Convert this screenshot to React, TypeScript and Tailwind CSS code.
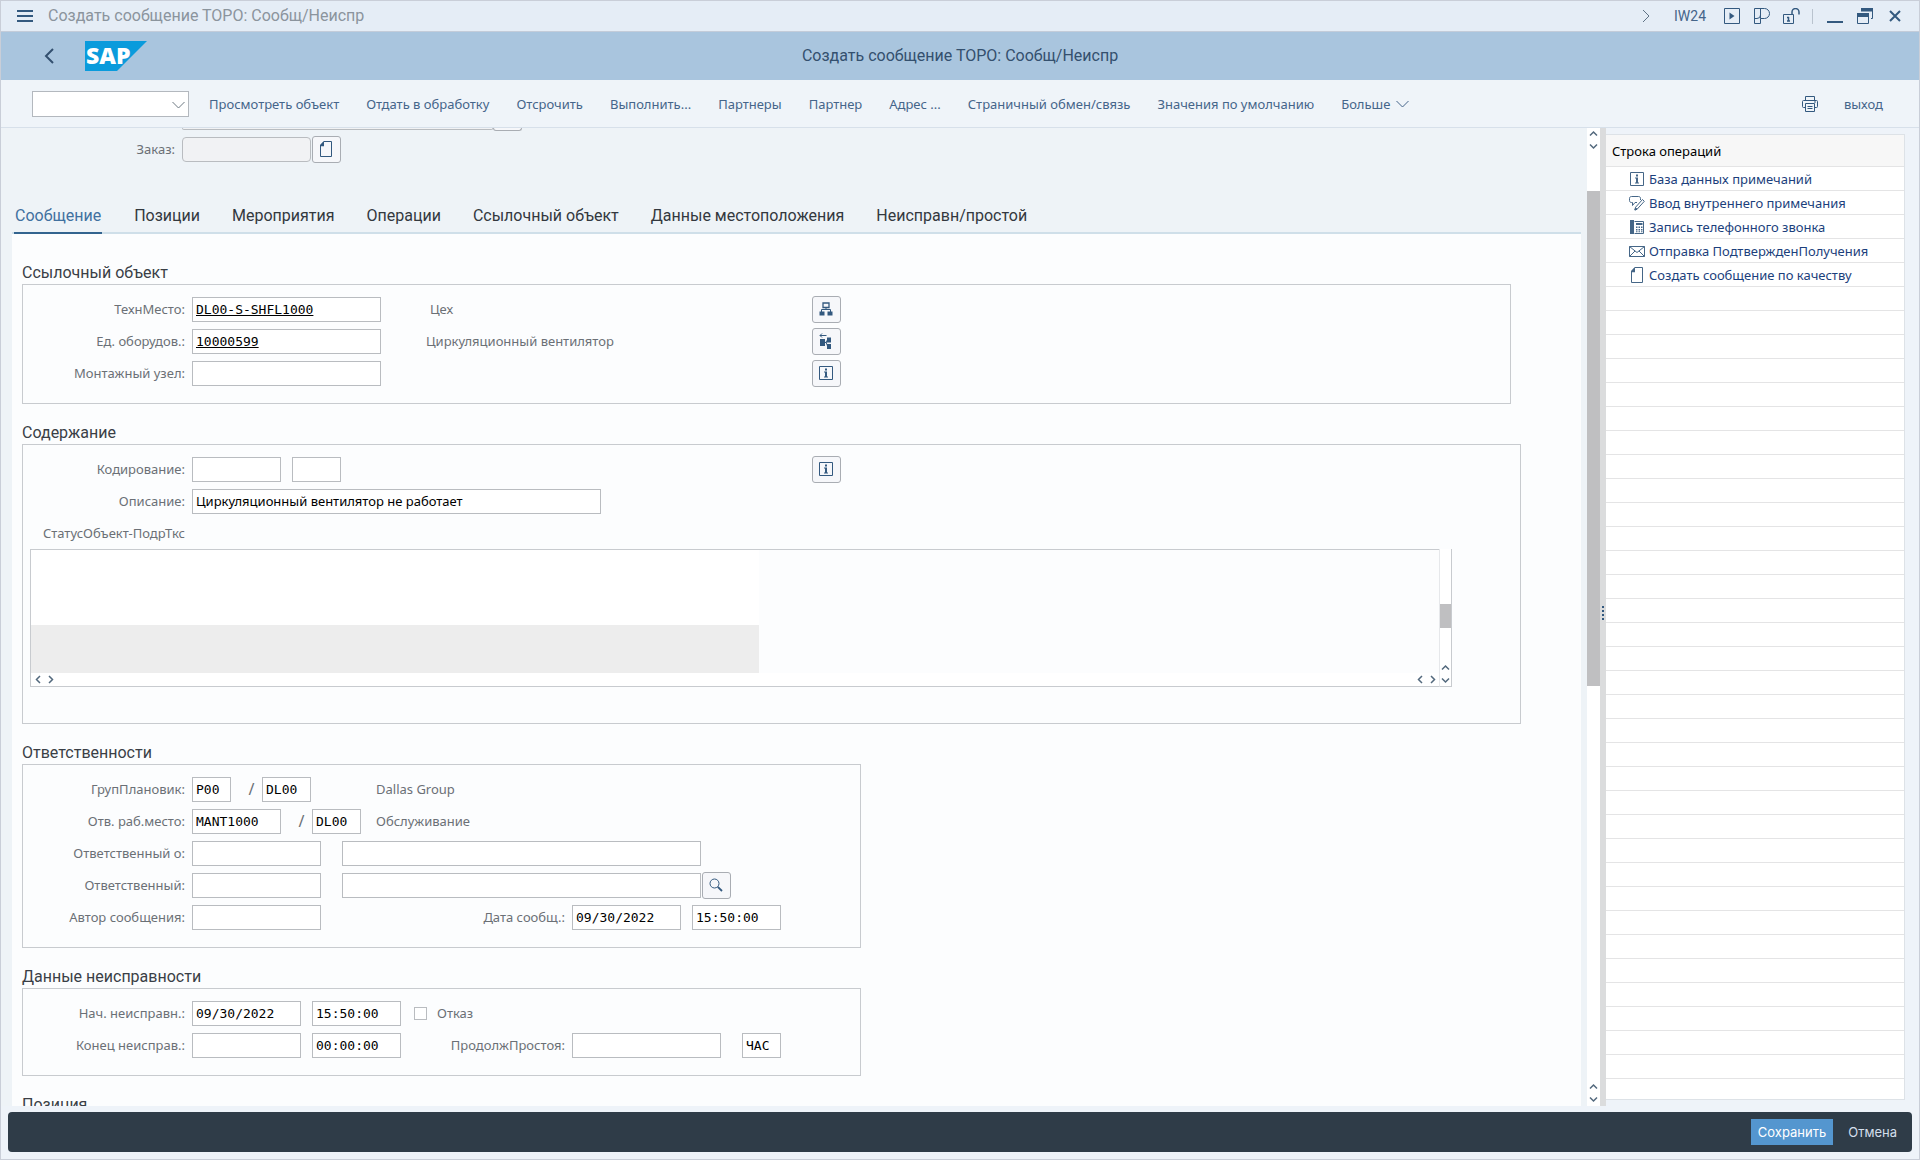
import React from "react";

type IconProps = { className?: string };

function DocIcon({ className = "" }: IconProps) {
  return (
    <svg viewBox="0 0 16 16" className={`h-4 w-4 shrink-0 ${className}`} fill="none" stroke="currentColor" aria-hidden="true">
      <path d="M6 .5h7.500v15H2.500V4.500z" />
      <path d="M2 5.200V4L6 0v5.200z" fill="currentColor" stroke="none" />
    </svg>
  );
}

function InfoIcon({ className = "" }: IconProps) {
  return (
    <svg viewBox="0 0 14 14" className={`h-3.5 w-3.5 shrink-0 ${className}`} fill="none" stroke="currentColor" aria-hidden="true">
      <path d="M.5.5h13v13H.5z" />
      <path d="M6 2.500h2V4.500H6zM5 5.500h3v5h1v1H5v-1h1v-4H5z" fill="currentColor" stroke="none" />
    </svg>
  );
}

function NoteEditIcon() {
  return (
    <svg viewBox="0 0 16 16" className="h-4 w-4 shrink-0" fill="none" stroke="currentColor" aria-hidden="true">
      <path d="M8 7.500H6L3.500 10.500V7.500H2.500C1 7.500.5 6.500.5 5.500v-2C.5 2 1.500 1.500 2.500 1.500h7c1 0 2 .5 2 2V5" />
      <path d="M13.500 4.500l1.800 1.800-7 7.700-2.500 1 .8-2.800z" />
      <path d="M6 15l.6-2 1.500 1.200z" fill="currentColor" />
    </svg>
  );
}

function FaxIcon() {
  return (
    <svg viewBox="0 0 16 16" className="h-4 w-4 shrink-0" fill="none" stroke="currentColor" aria-hidden="true">
      <path d="M1 1h4v14H1z" fill="currentColor" stroke="none" />
      <path d="M5.500 2.500h9v12h-9" />
      <path d="M7 4h6.500v2H7zM7 7.500h1.500V9H7zm2.500 0H11V9H9.500zm2.500 0h1.500V9H12zM7 10h1.500v1.500H7zm2.500 0H11v1.500H9.500zm2.500 0h1.500v1.500H12zM7 12.200h1.500v1H7zm2.500 0H11v1H9.500zm2.500 0h1.500v1H12z" fill="currentColor" stroke="none" />
    </svg>
  );
}

function MailIcon() {
  return (
    <svg viewBox="0 0 16 16" className="h-4 w-4 shrink-0" fill="none" stroke="currentColor" aria-hidden="true">
      <path d="M.5 3.500h15v10H.5z" />
      <path d="M.5 3.500L8 9.500l7.500-6M.5 13.500l5.500-5.500M15.500 13.500L10 8" />
    </svg>
  );
}

function PrinterIcon() {
  return (
    <svg viewBox="0 0 16 16" className="h-4 w-4" fill="none" stroke="currentColor" aria-hidden="true">
      <path d="M3.500 4.500v-4h9v4M3.500 11.500H1.500a1 1 0 0 1-1-1v-5a1 1 0 0 1 1-1h13a1 1 0 0 1 1 1v5a1 1 0 0 1-1 1h-2" />
      <path d="M3.500 7.500h9v8h-9zM5.500 10.500h5M5.500 12.500h5M12 6h2" />
    </svg>
  );
}

function HierarchyIcon() {
  return (
    <svg viewBox="0 0 14 14" className="h-3.5 w-3.5" fill="none" stroke="currentColor" aria-hidden="true">
      <path d="M4 1h6v4.500H4z" strokeWidth="1.300" />
      <path d="M7 5.500V7.500M2.500 10V7.500h9V10" />
      <path d="M.5 9.500h5v4h-5zM8.500 9.500h5v4h-5z" fill="currentColor" stroke="none" />
    </svg>
  );
}

function StructureIcon() {
  return (
    <svg viewBox="0 0 14 16" className="h-4 w-3.5" fill="none" stroke="currentColor" aria-hidden="true">
      <path d="M7.500 2.500H1M3 .5l-2 2 2 2" />
      <path d="M1 6h5v7H1zM8 4.500h4v5H8zM8 11h4v5H8z" fill="currentColor" stroke="none" />
      <path d="M5 9.500h2.500M8.500 7L7 9l1.500 4" />
    </svg>
  );
}

function SearchIcon() {
  return (
    <svg viewBox="0 0 14 14" className="h-3.5 w-3.5" fill="none" stroke="currentColor" aria-hidden="true">
      <circle cx="5.500" cy="5.500" r="4.500" />
      <path d="M8.800 8.800l4.200 4.200" strokeWidth="1.800" />
    </svg>
  );
}

function Chevron({ dir, className = "" }: { dir: "up" | "down" | "left" | "right"; className?: string }) {
  const d = {
    up: "M1 5.500L4.500 2l3.500 3.500",
    down: "M1 2.500L4.500 6 8 2.500",
    left: "M6 1L2.500 4.500 6 8",
    right: "M3 1l3.500 3.500L3 8",
  }[dir];
  return (
    <svg viewBox="0 0 9 9" className={`h-[9px] w-[9px] ${className}`} fill="none" stroke="#53697d" strokeWidth="1.500" aria-hidden="true">
      <path d={d} />
    </svg>
  );
}

function WideChevron({ className = "" }: IconProps) {
  return (
    <svg viewBox="0 0 13 8" className={`h-2 w-[13px] ${className}`} fill="none" stroke="currentColor" aria-hidden="true">
      <path d="M.5 1l6 6 6-6" />
    </svg>
  );
}

function IconButton({ label, children, className = "" }: { label: string; children: React.ReactNode; className?: string }) {
  return (
    <button
      type="button"
      aria-label={label}
      className={`flex h-[27px] w-[29px] shrink-0 items-center justify-center rounded-[3px] border border-[#a9adb3] bg-[#f6f7fa] pr-0.5 text-[#33597f] ${className}`}
    >
      {children}
    </button>
  );
}

function Field({ id, label, value = "", className, mono = true }: { id?: string; label?: string; value?: string; className: string; mono?: boolean }) {
  return (
    <input
      id={id}
      aria-label={label}
      type="text"
      defaultValue={value}
      className={`h-[25px] shrink-0 border border-[#b9bcc0] bg-white pl-[3px] text-[13px] leading-4 text-black ${mono ? "font-['DejaVu_Sans_Mono',monospace]" : ""} ${className}`}
    />
  );
}

function Label({ htmlFor, children, className = "w-[162px]" }: { htmlFor?: string; children: React.ReactNode; className?: string }) {
  return (
    <label htmlFor={htmlFor} className={`mr-[7px] shrink-0 text-right whitespace-nowrap ${className}`}>
      {children}
    </label>
  );
}

function Row({ children }: { children: React.ReactNode }) {
  return <div className="flex h-8 items-center">{children}</div>;
}

function Group({ title, className, children }: { title: string; className: string; children: React.ReactNode }) {
  return (
    <section className="flex flex-col">
      <h2 className="flex h-10 items-end font-['Roboto',sans-serif] text-[16px] leading-[22px] text-[#3a3f46]">{title}</h2>
      <div className={`border border-[#c8cbcf] pt-2 ${className}`}>{children}</div>
    </section>
  );
}

const menu = [
  "Просмотреть объект",
  "Отдать в обработку",
  "Отсрочить",
  "Выполнить...",
  "Партнеры",
  "Партнер",
  "Адрес ...",
  "Страничный обмен/связь",
  "Значения по умолчанию",
];

const tabs = ["Сообщение", "Позиции", "Мероприятия", "Операции", "Ссылочный объект", "Данные местоположения", "Неисправн/простой"];

const actions = [
  { text: "База данных примечаний", icon: <InfoIcon className="mx-px" /> },
  { text: "Ввод внутреннего примечания", icon: <NoteEditIcon /> },
  { text: "Запись телефонного звонка", icon: <FaxIcon /> },
  { text: "Отправка ПодтвержденПолучения", icon: <MailIcon /> },
  { text: "Создать сообщение по качеству", icon: <DocIcon /> },
];

function TitleBar() {
  return (
    <div className="flex h-8 shrink-0 items-center border-y border-t-[#c9ced8] border-b-[#c3ccd9] bg-[#e5edf6] pr-[18px] pl-4 text-[#33597f]">
      <button type="button" aria-label="Меню" className="mr-[15px]">
        <svg viewBox="0 0 16 14" className="h-3.5 w-4" stroke="currentColor" strokeWidth="2" aria-hidden="true">
          <path d="M0 2h16M0 7h16M0 12h16" />
        </svg>
      </button>
      <span className="grow font-['Roboto',sans-serif] text-[16px] leading-6 text-[#8b949d]">Создать сообщение ТОРО: Сообщ/Неиспр</span>
      <button type="button" aria-label="Развернуть">
        <svg viewBox="0 0 8 14" className="h-3.5 w-2" fill="none" stroke="#5f7385" aria-hidden="true">
          <path d="M1 1l6 6-6 6" />
        </svg>
      </button>
      <span className="ml-6 font-['Roboto',sans-serif] text-[14px] leading-5 text-[#45658a]">IW24</span>
      <button type="button" aria-label="Запустить" className="ml-[18px]">
        <svg viewBox="0 0 16 16" className="h-4 w-4" fill="none" stroke="currentColor" aria-hidden="true">
          <path d="M.5.5h15v15H.5z" />
          <path d="M5.500 4.500v7l5-3.500z" fill="currentColor" stroke="none" />
        </svg>
      </button>
      <button type="button" aria-label="Параметры" className="ml-3.5">
        <svg viewBox="0 0 16 16" className="h-4 w-4" fill="none" stroke="currentColor" aria-hidden="true">
          <path d="M.5.500h10a5 5 0 0 1 0 10h-4v5h-6zM6.500 .5v6.500a3.500 3.500 0 0 1-3.500 3.500H.5M6.500 10.500V7" />
        </svg>
      </button>
      <button type="button" aria-label="Разблокировать" className="ml-[13px]">
        <svg viewBox="0 0 17 17" className="h-[17px] w-[17px]" fill="none" stroke="currentColor" aria-hidden="true">
          <path d="M.5 6.500h10v9H.5z" />
          <path d="M9 6.500V4a3.500 3.500 0 0 1 7 0v2.500" strokeWidth="1.500" />
          <path d="M5.500 9v4M4 9.500h2M4 13h3" strokeWidth="1.500" />
        </svg>
      </button>
      <span className="ml-3 h-[15px] w-px bg-[#b9c3ce]" />
      <button type="button" aria-label="Свернуть" className="ml-[14px]">
        <svg viewBox="0 0 16 16" className="h-4 w-4" stroke="currentColor" strokeWidth="2" aria-hidden="true">
          <path d="M0 14h16" />
        </svg>
      </button>
      <button type="button" aria-label="Восстановить" className="ml-[14px]">
        <svg viewBox="0 0 16 16" className="h-4 w-4" fill="none" stroke="currentColor" aria-hidden="true">
          <path d="M4 0h12v3.500H4zM0 5h12v4H0z" fill="currentColor" stroke="none" />
          <path d="M.5 5.500h11v10H.5zM15.500 3v7.500H14" />
        </svg>
      </button>
      <button type="button" aria-label="Закрыть" className="ml-4">
        <svg viewBox="0 0 12 12" className="h-3 w-3" stroke="currentColor" strokeWidth="2" aria-hidden="true">
          <path d="M1 1l10 10M11 1L1 11" />
        </svg>
      </button>
    </div>
  );
}

function Header() {
  return (
    <header className="grid h-12 shrink-0 grid-cols-[1fr_auto_1fr] items-center bg-[#a9c5de]">
      <div className="flex items-center">
        <button type="button" aria-label="Назад" className="ml-[43px] text-[#33506f]">
          <svg viewBox="0 0 10 16" className="h-4 w-2.5" fill="none" stroke="currentColor" strokeWidth="2" aria-hidden="true">
            <path d="M9 1L2 8l7 7" />
          </svg>
        </button>
        <svg viewBox="0 0 62 30" className="ml-[31px] h-[30px] w-[62px] overflow-visible" role="img" aria-label="SAP">
          <path d="M0 0h62L32 30H0z" fill="#0a9bdc" />
          <text x="1" y="23" fill="#fff" fontFamily="Open Sans" fontWeight="800" fontSize="23">SAP</text>
        </svg>
      </div>
      <h1 className="font-['Roboto',sans-serif] text-[16px] leading-6 text-[#34506e]">Создать сообщение ТОРО: Сообщ/Неиспр</h1>
      <div />
    </header>
  );
}

function Toolbar() {
  return (
    <nav className="flex h-12 shrink-0 items-center border-b border-[#d7e0ea] bg-[#eff4f9] pr-9 pl-[31px] text-[13px] leading-5 text-[#45658a]">
      <div className="relative">
        <select aria-label="Код транзакции" className="block h-[26px] w-[157px] appearance-none border border-[#b3b8be] bg-white" />
        <WideChevron className="pointer-events-none absolute top-[10px] right-1 text-[#6d7882]" />
      </div>
      <ul className="ml-5 flex items-center gap-[27px]">
        {menu.map((m) => (
          <li key={m}>
            <button type="button" className="whitespace-nowrap">{m}</button>
          </li>
        ))}
        <li>
          <button type="button" className="flex items-center gap-1.5">
            Больше
            <WideChevron />
          </button>
        </li>
      </ul>
      <button type="button" aria-label="Печать" className="ml-auto text-[#33597f]">
        <PrinterIcon />
      </button>
      <button type="button" className="ml-[26px]">выход</button>
    </nav>
  );
}

function TextEditor() {
  return (
    <div className="mr-[68px] ml-[7px] flex h-[138px] border-l border-[#c8cbcf]">
      <div className="flex min-w-0 grow flex-col border-y border-[#c8cbcf]">
        <div className="w-[728px] bg-white">
          <textarea aria-label="Текст сообщения" className="block h-[75px] w-full resize-none bg-white outline-none" />
          <div className="h-12 bg-[#ededed]" />
        </div>
        <div className="flex grow items-center justify-between bg-white pr-0.5 pl-[3px]">
          <div className="flex gap-[3px]">
            <Chevron dir="left" />
            <Chevron dir="right" />
          </div>
          <div className="flex gap-[3px]">
            <Chevron dir="left" />
            <Chevron dir="right" />
          </div>
        </div>
      </div>
      <div className="flex w-[13px] flex-col items-center border-x border-b border-r-[#c8cbcf] border-b-[#c8cbcf] border-l-[#e6e8eb] bg-white pb-[1px]">
        <div className="mt-[55px] mb-auto h-6 w-full bg-[#bfbfc1]" />
        <Chevron dir="up" className="mb-[3px]" />
        <Chevron dir="down" />
      </div>
    </div>
  );
}

function MessageForm() {
  return (
    <div className="flex grow flex-col pt-2.5 pl-2.5 text-[13px] leading-4 text-[#6b7076]">
      <Group title="Ссылочный объект" className="mr-[70px] h-[120px]">
        <Row>
          <Label htmlFor="place">ТехнМесто:</Label>
          <Field id="place" value="DL00-S-SHFL1000" className="w-[189px] underline" />
          <span className="ml-[49px] w-[382px]">Цех</span>
          <IconButton label="Структура места"><HierarchyIcon /></IconButton>
        </Row>
        <Row>
          <Label htmlFor="equip">Ед. оборудов.:</Label>
          <Field id="equip" value="10000599" className="w-[189px] underline" />
          <span className="ml-[45px] w-[386px]">Циркуляционный вентилятор</span>
          <IconButton label="Структура оборудования"><StructureIcon /></IconButton>
        </Row>
        <Row>
          <Label htmlFor="unit">Монтажный узел:</Label>
          <Field id="unit" className="w-[189px]" />
          <IconButton label="Информация об узле" className="ml-[431px]"><InfoIcon /></IconButton>
        </Row>
      </Group>

      <Group title="Содержание" className="mr-[60px] h-[280px]">
        <Row>
          <Label htmlFor="code">Кодирование:</Label>
          <Field id="code" className="w-[89px]" />
          <Field label="Код" className="ml-[11px] w-[49px]" />
          <IconButton label="Информация о коде" className="ml-[471px]"><InfoIcon /></IconButton>
        </Row>
        <Row>
          <Label htmlFor="descr">Описание:</Label>
          <Field id="descr" mono={false} value="Циркуляционный вентилятор не работает" className="w-[409px]" />
        </Row>
        <Row>
          <Label>СтатусОбъект-ПодрТкс</Label>
        </Row>
        <TextEditor />
      </Group>

      <Group title="Ответственности" className="h-[184px] w-[839px]">
        <Row>
          <Label htmlFor="planner">ГрупПлановик:</Label>
          <Field id="planner" value="P00" className="w-[39px]" />
          <span className="ml-2.5 w-[21px] text-center text-[16px]">/</span>
          <Field label="Завод планирования" value="DL00" className="w-[49px]" />
          <span className="ml-[65px]">Dallas Group</span>
        </Row>
        <Row>
          <Label htmlFor="workplace">Отв. раб.место:</Label>
          <Field id="workplace" value="MANT1000" className="w-[89px]" />
          <span className="ml-2.5 w-[21px] text-center text-[16px]">/</span>
          <Field label="Завод рабочего места" value="DL00" className="w-[49px]" />
          <span className="ml-[15px]">Обслуживание</span>
        </Row>
        <Row>
          <Label htmlFor="resp1">Ответственный о:</Label>
          <Field id="resp1" className="w-[129px]" />
          <Field label="Имя ответственного отдела" className="ml-[21px] w-[359px]" />
        </Row>
        <Row>
          <Label htmlFor="resp2">Ответственный:</Label>
          <Field id="resp2" className="w-[129px]" />
          <Field label="Имя ответственного" className="ml-[21px] w-[359px]" />
          <IconButton label="Поиск" className="ml-px"><SearchIcon /></IconButton>
        </Row>
        <Row>
          <Label htmlFor="author">Автор сообщения:</Label>
          <Field id="author" className="w-[129px]" />
          <Label htmlFor="date" className="w-[244px]">Дата сообщ.:</Label>
          <Field id="date" value="09/30/2022" className="w-[109px]" />
          <Field label="Время сообщения" value="15:50:00" className="ml-[11px] w-[89px]" />
        </Row>
      </Group>

      <Group title="Данные неисправности" className="h-[88px] w-[839px]">
        <Row>
          <Label htmlFor="start">Нач. неисправн.:</Label>
          <Field id="start" value="09/30/2022" className="w-[109px]" />
          <Field label="Время начала" value="15:50:00" className="ml-[11px] w-[89px]" />
          <input id="fail" type="checkbox" className="ml-[13px] h-[13px] w-[13px] appearance-none border border-[#b9bcc0] bg-white" />
          <label htmlFor="fail" className="ml-2.5">Отказ</label>
        </Row>
        <Row>
          <Label htmlFor="end">Конец неисправ.:</Label>
          <Field id="end" className="w-[109px]" />
          <Field label="Время окончания" value="00:00:00" className="ml-[11px] w-[89px]" />
          <Label htmlFor="down" className="w-[164px]">ПродолжПростоя:</Label>
          <Field id="down" className="w-[149px]" />
          <Field label="Единица" value="ЧАС" className="ml-[21px] w-[39px]" />
        </Row>
      </Group>

      <Group title="Позиция" className="mr-[70px] h-40">
        {null}
      </Group>
    </div>
  );
}

function MainPanel() {
  return (
    <main className="flex min-w-0 grow flex-col overflow-hidden bg-[#eef3f7] pr-[6px]">
      <div className="flex h-[3px] shrink-0 items-start pl-[181px]">
        <div className="h-0.5 w-[311px] rounded-b-sm border-x border-b border-[#b9bcc0] bg-[#f1f2f4]" />
        <div className="h-[3px] w-[29px] rounded-b-[3px] border-x border-b border-[#a9adb3] bg-[#f6f7fa]" />
      </div>
      <div className="mt-[2px] flex h-8 shrink-0 items-center text-[13px] leading-4 text-[#6b7076]">
        <Label htmlFor="order" className="w-[174px]">Заказ:</Label>
        <input id="order" readOnly className="h-[25px] w-[129px] rounded-sm border border-[#b9bcc0] bg-[#f1f2f4]" />
        <IconButton label="Создать заказ" className="ml-px"><DocIcon /></IconButton>
      </div>
      <div role="tablist" className="ml-[11px] flex h-[69px] shrink-0 items-end gap-8 border-b-2 border-[#cfdfe9] pl-0.5 font-['Roboto',sans-serif] text-[16px] leading-6 text-[#33383e]">
        {tabs.map((t, i) => (
          <button
            key={t}
            type="button"
            role="tab"
            aria-selected={i === 0}
            className={i === 0 ? "-mb-0.5 border-b-2 border-[#33648f] px-px pb-1 text-[#41709f]" : "pb-1"}
          >
            {t}
          </button>
        ))}
      </div>
      <div className="ml-[11px] flex min-h-0 grow flex-col overflow-hidden bg-[#fcfdfe]">
        <MessageForm />
      </div>
    </main>
  );
}

function ActionPanel() {
  return (
    <aside className="mt-1.5 mr-[14px] mb-1.5 flex w-[299px] shrink-0 flex-col overflow-hidden border-t border-r border-b border-[#dde2e7] bg-white text-[13px] leading-4">
      <h2 className="flex h-8 shrink-0 items-center border-b border-[#e4e4e5] bg-[#f7f7f7] pl-1.5 text-black">Строка операций</h2>
      <ul className="min-h-0 grow overflow-hidden">
        {Array.from({ length: 39 }, (_, i) => (
          <li key={i} className="flex h-6 items-center border-b border-[#e4e4e5] pl-[23px]">
            {actions[i] && (
              <a href="#" className="flex items-center gap-1 whitespace-nowrap text-[#1c3f7c]">
                <span className="text-[#456687]">{actions[i].icon}</span>
                {actions[i].text}
              </a>
            )}
          </li>
        ))}
      </ul>
    </aside>
  );
}

export default function App() {
  return (
    <div className="flex h-screen flex-col overflow-hidden border-x border-b border-[#c9ced8] bg-[#eef3f9] font-['Noto_Sans','Liberation_Sans',sans-serif]">
      <TitleBar />
      <Header />
      <Toolbar />
      <div className="flex min-h-0 grow">
        <MainPanel />
        <div className="flex w-[13px] shrink-0 flex-col items-center bg-white py-[2px]">
          <Chevron dir="up" />
          <Chevron dir="down" className="mt-[3px]" />
          <div className="mt-10 h-[495px] w-full bg-[#bfbfc1]" />
          <Chevron dir="up" className="mt-auto" />
          <Chevron dir="down" className="mt-[3px]" />
        </div>
        <div className="flex w-1.5 shrink-0 flex-col items-center justify-center gap-0.5 bg-[#dbdcdd] pb-2">
          <i className="h-0.5 w-0.5 bg-[#33597f]" />
          <i className="h-0.5 w-0.5 bg-[#33597f]" />
          <i className="h-0.5 w-0.5 bg-[#33597f]" />
          <i className="h-0.5 w-0.5 bg-[#33597f]" />
        </div>
        <ActionPanel />
      </div>
      <footer className="mx-[7px] mt-1.5 mb-[7px] flex h-10 shrink-0 items-center justify-end gap-[15px] rounded-[4px] bg-[#2f3c48] pr-[15px] font-['Inter','Roboto',sans-serif] text-[13px] leading-5">
        <button type="button" className="h-[26px] bg-[#5496cf] px-[7px] text-white">Сохранить</button>
        <button type="button" className="text-[#d3dfec]">Отмена</button>
      </footer>
    </div>
  );
}
